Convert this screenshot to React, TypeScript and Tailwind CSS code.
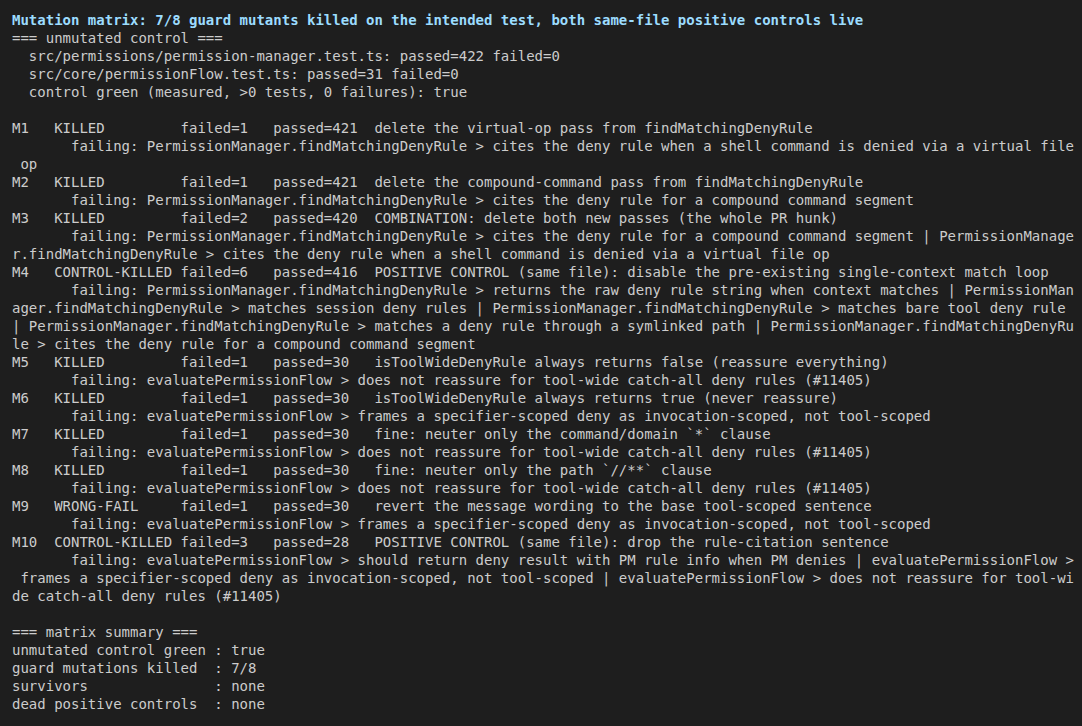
import React from 'react';

// Terminal output, one entry per visual (already wrapped) line
const lines: string[] = [
    "=== unmutated control ===",
    "  src/permissions/permission-manager.test.ts: passed=422 failed=0",
    "  src/core/permissionFlow.test.ts: passed=31 failed=0",
    "  control green (measured, >0 tests, 0 failures): true",
    "",
    "M1   KILLED         failed=1   passed=421  delete the virtual-op pass from findMatchingDenyRule",
    "       failing: PermissionManager.findMatchingDenyRule > cites the deny rule when a shell command is denied via a virtual file",
    " op",
    "M2   KILLED         failed=1   passed=421  delete the compound-command pass from findMatchingDenyRule",
    "       failing: PermissionManager.findMatchingDenyRule > cites the deny rule for a compound command segment",
    "M3   KILLED         failed=2   passed=420  COMBINATION: delete both new passes (the whole PR hunk)",
    "       failing: PermissionManager.findMatchingDenyRule > cites the deny rule for a compound command segment | PermissionManage",
    "r.findMatchingDenyRule > cites the deny rule when a shell command is denied via a virtual file op",
    "M4   CONTROL-KILLED failed=6   passed=416  POSITIVE CONTROL (same file): disable the pre-existing single-context match loop",
    "       failing: PermissionManager.findMatchingDenyRule > returns the raw deny rule string when context matches | PermissionMan",
    "ager.findMatchingDenyRule > matches session deny rules | PermissionManager.findMatchingDenyRule > matches bare tool deny rule",
    "| PermissionManager.findMatchingDenyRule > matches a deny rule through a symlinked path | PermissionManager.findMatchingDenyRu",
    "le > cites the deny rule for a compound command segment",
    "M5   KILLED         failed=1   passed=30   isToolWideDenyRule always returns false (reassure everything)",
    "       failing: evaluatePermissionFlow > does not reassure for tool-wide catch-all deny rules (#11405)",
    "M6   KILLED         failed=1   passed=30   isToolWideDenyRule always returns true (never reassure)",
    "       failing: evaluatePermissionFlow > frames a specifier-scoped deny as invocation-scoped, not tool-scoped",
    "M7   KILLED         failed=1   passed=30   fine: neuter only the command/domain `*` clause",
    "       failing: evaluatePermissionFlow > does not reassure for tool-wide catch-all deny rules (#11405)",
    "M8   KILLED         failed=1   passed=30   fine: neuter only the path `//**` clause",
    "       failing: evaluatePermissionFlow > does not reassure for tool-wide catch-all deny rules (#11405)",
    "M9   WRONG-FAIL     failed=1   passed=30   revert the message wording to the base tool-scoped sentence",
    "       failing: evaluatePermissionFlow > frames a specifier-scoped deny as invocation-scoped, not tool-scoped",
    "M10  CONTROL-KILLED failed=3   passed=28   POSITIVE CONTROL (same file): drop the rule-citation sentence",
    "       failing: evaluatePermissionFlow > should return deny result with PM rule info when PM denies | evaluatePermissionFlow >",
    " frames a specifier-scoped deny as invocation-scoped, not tool-scoped | evaluatePermissionFlow > does not reassure for tool-wi",
    "de catch-all deny rules (#11405)",
    "",
    "=== matrix summary ===",
    "unmutated control green : true",
    "guard mutations killed  : 7/8",
    "survivors               : none",
    "dead positive controls  : none",
];

export default function App() {
    return (
        <div className="min-h-screen w-full bg-[#1e1e1e] pt-[11px] pl-3 font-['DejaVu_Sans_Mono',monospace] text-[14px] leading-[18px] text-[#cccccc]">
            <div className="whitespace-pre font-bold text-[#9cdcfe]">
                Mutation matrix: 7/8 guard mutants killed on the intended test, both same-file positive controls live
            </div>
            {lines.map((line, index) => (
                <div key={index} className="h-[18px] whitespace-pre">{line}</div>
            ))}
        </div>
    );
}
